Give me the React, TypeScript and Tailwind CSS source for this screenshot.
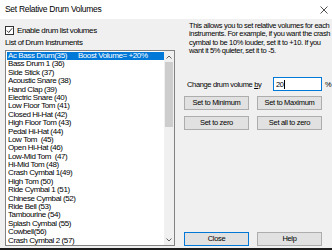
import React from "react";

const drums = [
  "Bass Drum 1 (36)",
  "Side Stick (37)",
  "Acoustic Snare (38)",
  "Hand Clap (39)",
  "Electric Snare (40)",
  "Low Floor Tom (41)",
  "Closed Hi-Hat (42)",
  "High Floor Tom (43)",
  "Pedal Hi-Hat (44)",
  "Low Tom  (45)",
  "Open Hi-Hat (46)",
  "Low-Mid Tom  (47)",
  "Hi-Mid Tom (48)",
  "Crash Cymbal 1(49)",
  "High Tom (50)",
  "Ride Cymbal 1 (51)",
  "Chinese Cymbal (52)",
  "Ride Bell (53)",
  "Tambourine (54)",
  "Splash Cymbal (55)",
  "Cowbell(56)",
  "Crash Cymbal 2 (57)",
];

function Btn({ label, primary }: { label: string; primary?: boolean }) {
  return (
    <button
      className={`w-[65px] h-[14px] bg-[#e1e1e1] border text-[7.5px] tracking-[-0.3px] leading-none text-black ${
        primary ? "border-[#0078d7]" : "border-[#adadad]"
      }`}
    >
      {label}
    </button>
  );
}

export default function App() {
  return (
    <div
      className="w-[332px] h-[250px] bg-[#f0f0f0] flex flex-col border-b-2 border-[#1c1c1c] overflow-hidden text-black"
      style={{ fontFamily: "'Liberation Sans', Arial, sans-serif" }}
    >
      {/* title bar */}
      <div className="h-[19px] bg-white flex items-center justify-between pl-[5px] pr-[3px] shrink-0">
        <span className="text-[8.5px] tracking-[-0.3px]">Set Relative Drum Volumes</span>
        <svg width="8" height="8" viewBox="0 0 8 8" className="mr-[1px]">
          <path d="M0.5 0.5 L7.5 7.5 M7.5 0.5 L0.5 7.5" stroke="#222" strokeWidth="0.8" />
        </svg>
      </div>

      <div className="flex flex-1 text-[7.5px] tracking-[-0.35px]">
        {/* left column */}
        <div className="w-[175px] pl-[5px] flex flex-col shrink-0 text-[8px] tracking-[-0.4px]">
          <div className="flex items-center gap-[3px] mt-[7px] h-[9px]">
            <div className="w-[9px] h-[9px] border border-[#333] bg-white flex items-center justify-center">
              <svg width="7" height="7" viewBox="0 0 7 7">
                <path d="M0.8 3.6 L2.7 5.5 L6.2 1.2" fill="none" stroke="#222" strokeWidth="0.9" />
              </svg>
            </div>
            <span className="leading-none">Enable drum list volumes</span>
          </div>
          <div className="leading-none mt-[4px] h-[9px]">List of Drum Instruments</div>
          <div className="mt-[2px] h-[196px] border border-[#828282] bg-white flex">
            <div className="flex-1 pt-[1px] pl-[1px] overflow-hidden">
              <div className="h-[8.4px] bg-[#0078d7] text-white leading-[8.4px] pl-[1px] whitespace-pre">
                {"Ac Bass Drum(35)      Boost Volume= +20%"}
              </div>
              {drums.map((d) => (
                <div key={d} className="h-[8.4px] leading-[8.4px] pl-[1px] whitespace-pre">
                  {d}
                </div>
              ))}
            </div>
            <div className="w-[10px] bg-[#f0f0f0] flex flex-col items-center">
              <div className="h-[11px] flex items-center justify-center">
                <svg width="6" height="4" viewBox="0 0 6 4">
                  <path d="M0.5 3.5 L3 1 L5.5 3.5" fill="none" stroke="#606060" strokeWidth="1" />
                </svg>
              </div>
              <div className="w-[8px] h-[65px] bg-[#cdcdcd]" />
              <div className="flex-1" />
              <div className="h-[11px] flex items-center justify-center">
                <svg width="6" height="4" viewBox="0 0 6 4">
                  <path d="M0.5 0.5 L3 3 L5.5 0.5" fill="none" stroke="#606060" strokeWidth="1" />
                </svg>
              </div>
            </div>
          </div>
        </div>

        {/* right column */}
        <div className="flex-1 pl-[9px] flex flex-col">
          <div className="mt-[3px] pl-[5px] leading-[8.3px] whitespace-nowrap">
            This allows you to set relative volumes for each
            <br />
            instruments. For example, if you want the crash
            <br />
            cymbal to be 10% louder, set it to +10. If you
            <br />
            want it 5% quieter, set it to -5.
          </div>
          <div className="mt-[22px] flex items-center h-[14px]">
            <span className="pl-[3px] w-[89px] whitespace-nowrap">
              Change drum volume <span className="underline">b</span>y
            </span>
            <div className="w-[49px] h-[14px] border border-[#0078d7] bg-white flex items-center pl-[2px]">
              20<span className="w-px h-[9px] bg-black" />
            </div>
            <span className="ml-[3px]">%</span>
          </div>
          <div className="mt-[5px] flex gap-[8px]">
            <Btn label="Set to Minimum" />
            <Btn label="Set to Maximum" />
          </div>
          <div className="mt-[6px] flex gap-[8px]">
            <Btn label="Set to zero" />
            <Btn label="Set all to zero" />
          </div>
          <div className="flex-1" />
          <div className="mb-[2px] flex gap-[8px]">
            <Btn label="Close" primary />
            <Btn label="Help" />
          </div>
        </div>
      </div>
    </div>
  );
}
